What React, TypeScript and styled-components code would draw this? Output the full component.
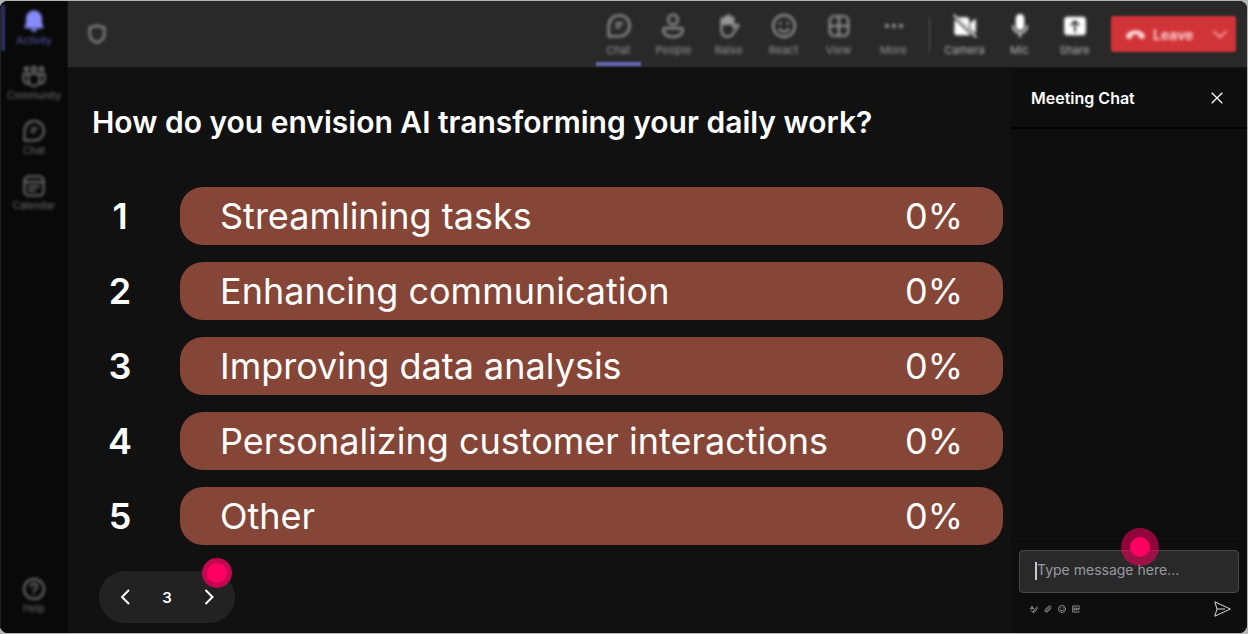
import React from "react";
import styled, { createGlobalStyle, css } from "styled-components";

const GlobalStyle = createGlobalStyle`
  *, *::before, *::after { box-sizing: border-box; }
  body {
    margin: 0;
    background: #b4b6b4;
    font-family: Inter, "Liberation Sans", sans-serif;
    color: #fff;
  }
  button { font: inherit; color: inherit; background: none; border: 0; padding: 0; cursor: pointer; }
  h1, h2, ol { margin: 0; padding: 0; }
`;

const Page = styled.div`
  min-height: 100vh;
  padding: 1px 1px 1px 0;
  display: flex;
`;

const Window = styled.div`
  flex: 1;
  min-width: 0;
  display: flex;
  background: #0e0e0e;
  border-radius: 8px;
  overflow: hidden;
`;

const Sidebar = styled.nav`
  width: 67px;
  flex: none;
  display: flex;
  flex-direction: column;
  background: #090909;
  border-left: 1px solid #202020;
  box-shadow: 0 0 3px #0c0c0c;
`;

const Spacer = styled.div`
  flex: 1;
`;

const IconLabel = styled.span`
  display: flex;
  flex-direction: column;
  align-items: center;
  filter: blur(1px);
`;

const SideButton = styled.button<{ $active?: boolean }>`
  display: flex;
  justify-content: center;
  align-items: flex-start;
  height: 55px;
  padding-top: 8px;
  color: #727272;
  font-size: 10px;
  line-height: 14px;
  position: relative;
  filter: blur(1px);
  svg { color: ${(p) => (p.$active ? "#878bfa" : "inherit")}; }
  ${(p) =>
    p.$active &&
    css`
      color: #5c5eb8;
      &::before {
        content: "";
        position: absolute;
        left: 0;
        top: 4px;
        width: 4px;
        height: 46px;
        background: #303163;
      }
    `}
`;

const HelpArea = styled.div`
  display: grid;
  padding-bottom: 9px;
`;

const Workspace = styled.div`
  flex: 1;
  min-width: 0;
  display: flex;
  flex-direction: column;
  padding-left: 1px;
`;

const Toolbar = styled.header`
  height: 66px;
  flex: none;
  display: flex;
  align-items: center;
  padding: 0 11px 0 18px;
  background: #292929;
  box-shadow: 0 1px 3px #1a1a1a;
`;

const Shield = styled.button`
  display: flex;
  color: #8a8a8a;
  filter: blur(1px);
  svg { filter: blur(1px); }
`;

const ToolButton = styled.button<{ $bright?: boolean; $active?: boolean }>`
  display: flex;
  justify-content: center;
  align-items: flex-start;
  width: 55px;
  height: 66px;
  padding-top: 12px;
  font-size: 11px;
  line-height: 14px;
  color: ${(p) => (p.$bright ? "#b8b8b8" : "#989898")};
  position: relative;
  filter: blur(1px);
  svg { margin-bottom: 4px; color: ${(p) => (p.$bright ? "#ffffff" : "inherit")}; }
  ${(p) =>
    p.$active &&
    css`
      &::after {
        content: "";
        position: absolute;
        left: 5px;
        right: 5px;
        bottom: 1px;
        height: 4px;
        background: #6669b8;
      }
    `}
`;

const Divider = styled.span`
  width: 1px;
  height: 35px;
  margin: 0 7px 0 8px;
  background: #555;
  filter: blur(1px);
`;

const LeaveGroup = styled.div`
  display: flex;
  height: 36px;
  margin-left: 9px;
  background: #d13438;
  border-radius: 3px;
  filter: blur(1px);
`;

const LeaveButton = styled.button`
  width: 92px;
  display: flex;
  align-items: center;
  gap: 7px;
  padding-left: 14px;
  font-size: 14px;
  font-weight: 600;
  color: #ffdcdc;
  filter: blur(1px);
`;

const LeaveMenu = styled.button`
  width: 33px;
  display: grid;
  place-items: center;
  color: #ffb8b8;
  filter: blur(1px);
`;

const Body = styled.div`
  flex: 1;
  display: flex;
  padding-top: 2px;
`;

const Poll = styled.main`
  flex: 1;
  min-width: 0;
  background: #111;
  padding: 35px 8px 10px 24px;
`;

const Question = styled.h1`
  font-size: 30px;
  line-height: 36px;
  font-weight: 600;
`;

const Options = styled.ol`
  list-style: none;
  display: grid;
  gap: 17px;
  margin-top: 47px;
`;

const Option = styled.li`
  display: flex;
  align-items: center;
  height: 58px;
`;

const Rank = styled.span`
  width: 56px;
  margin-right: 32px;
  text-align: center;
  font-size: 36px;
  font-weight: 600;
`;

const Bar = styled.button`
  flex: 1;
  height: 58px;
  display: flex;
  align-items: center;
  justify-content: space-between;
  padding: 0 40px;
  background: #854637;
  border-radius: 23px;
  font-size: 36px;
  line-height: 58px;
  text-align: left;
`;

const Pager = styled.div`
  position: relative;
  width: 136px;
  height: 52px;
  margin: 26px 0 0 7px;
  display: flex;
  align-items: center;
  justify-content: space-between;
  padding: 0 16px;
  background: #222;
  border-radius: 26px;
  font-size: 15px;
  font-weight: 600;
`;

const PagerButton = styled.button`
  width: 20px;
  height: 24px;
  display: grid;
  place-items: center;
`;

const Hotspot = styled.span<{ $size: number; $ring: string }>`
  position: absolute;
  width: ${(p) => p.$size}px;
  height: ${(p) => p.$size}px;
  border-radius: 50%;
  background: ${(p) => p.$ring};
  display: grid;
  place-items: center;
  pointer-events: none;
  &::after {
    content: "";
    width: 20px;
    height: 20px;
    border-radius: 50%;
    background: #ff0062;
  }
`;

const PagerHotspot = styled(Hotspot)`
  right: 3px;
  top: -13px;
`;

const ChatHotspot = styled(Hotspot)`
  left: 50%;
  top: -22px;
  margin-left: -8px;
`;

const ChatPanel = styled.aside`
  width: 236px;
  flex: none;
  display: flex;
  flex-direction: column;
  background: #0e0e0e;
`;

const ChatHeader = styled.div`
  height: 60px;
  display: flex;
  align-items: center;
  justify-content: space-between;
  padding: 0 24px 0 20px;
  border-bottom: 2px solid #020202;
  h2 { font-size: 16px; line-height: 20px; font-weight: 600; }
  button { display: flex; }
`;

const Messages = styled.div`
  flex: 1;
`;

const Composer = styled.form`
  border-top: 1px solid #080808;
  padding: 8px 8px 9px;
`;

const Field = styled.div`
  position: relative;
  display: flex;
`;

const MessageInput = styled.input`
  width: 100%;
  height: 43px;
  padding: 0 17px 4px;
  background: #292929;
  border: 1px solid #484848;
  border-radius: 4px;
  color: #fff;
  font: 14px/20px Inter, "Liberation Sans", sans-serif;
  outline: 0;
  &::placeholder { color: #959ba3; opacity: 1; }
`;

const Caret = styled.span`
  position: absolute;
  left: 16px;
  top: 12px;
  width: 2px;
  height: 18px;
  background: #c8c8c8;
`;

const Actions = styled.div`
  display: flex;
  align-items: center;
  gap: 6px;
  height: 31px;
  padding: 0 8px 0 11px;
  color: #a0a0a0;
  button { display: flex; }
`;

type IconProps = { size?: number; children: React.ReactNode; filled?: boolean; weight?: number };

const Icon = ({ size = 24, children, filled, weight = 2 }: IconProps) => (
  <svg
    width={size}
    height={size}
    viewBox="0 0 24 24"
    fill={filled ? "currentColor" : "none"}
    stroke={filled ? "none" : "currentColor"}
    strokeWidth={weight}
    strokeLinecap="round"
    strokeLinejoin="round"
    aria-hidden="true"
  >
    {children}
  </svg>
);

const chatShape = (
  <>
    <path d="M2.5 21.5V12A9.700 9.700 0 1 1 12 21.500z" />
    <path d="M9.500 9.500h5.500M9.500 13h3" />
  </>
);

const communityShape = (
  <>
    <circle cx="4.5" cy="5" r="1.800" />
    <circle cx="12" cy="5" r="2.200" />
    <circle cx="19.500" cy="5" r="1.800" />
    <path d="M6.500 10h11v6.500a5.500 5.500 0 0 1-11 0zM6.500 10H1.500v5.500a4 4 0 0 0 5 3.800M17.500 10h5v5.500a4 4 0 0 1-5 3.800" />
  </>
);

const calendarShape = (
  <>
    <rect x="2.500" y="2.500" width="19" height="19" rx="4" />
    <path d="M2.500 8h19M7 12.500h10M7 16.500h6" />
  </>
);

const tools = [
  {
    label: "Chat",
    icon: <Icon size={26}>{chatShape}</Icon>,
  },
  {
    label: "People",
    icon: (
      <Icon size={26}>
        <circle cx="12" cy="6" r="4.500" />
        <path d="M5 14h14a2 2 0 0 1 2 2c0 3.500-4 6-9 6s-9-2.500-9-6a2 2 0 0 1 2-2z" />
      </Icon>
    ),
  },
  {
    label: "Raise",
    icon: (
      <Icon size={26}>
        <path
          d="M4.500 11V5.500a1.500 1.500 0 0 1 3 0V3.500a1.500 1.500 0 0 1 3 0V2.500a1.500 1.500 0 0 1 3 0v2a1.500 1.500 0 0 1 3 0V11z"
          fill="currentColor"
          stroke="none"
        />
        <path d="M5 6v9.500c0 4 2 6.500 5.500 6.500 3 0 4.500-1.500 6-4l4.500-6.500c-1.500-1.300-3-.5-5 2V5" />
      </Icon>
    ),
  },
  {
    label: "React",
    icon: (
      <Icon size={26}>
        <circle cx="12" cy="12" r="10" />
        <path d="M7.500 15c2.500 3 6.500 3 9 0" />
        <path d="M8.500 9.500v.2M15.500 9.500v.2" strokeWidth="2.500" />
      </Icon>
    ),
  },
  {
    label: "View",
    icon: (
      <Icon size={26}>
        <rect x="3.500" y="3" width="17" height="18" rx="4" />
        <path d="M12 3v18M3.500 12h17" />
      </Icon>
    ),
  },
  {
    label: "More",
    icon: (
      <Icon size={26} filled>
        <circle cx="5.500" cy="12" r="2" />
        <circle cx="12" cy="12" r="2" />
        <circle cx="18.500" cy="12" r="2" />
      </Icon>
    ),
  },
];

const devices = [
  {
    label: "Camera",
    icon: (
      <Icon size={26} filled>
        <path d="M5.500 4H13a3 3 0 0 1 3 3v7.500zM2.500 5.500l15 15H5a3 3 0 0 1-3-3zM17 9l5-4v14l-5-4.500z" />
        <path d="M2 2l20 20" stroke="currentColor" strokeWidth="1.500" />
      </Icon>
    ),
  },
  {
    label: "Mic",
    icon: (
      <Icon size={26} filled>
        <rect x="8" y="1" width="8" height="15" rx="4" />
        <path
          d="M5.500 12a6.500 6.500 0 0 0 13 0M12 18.500V22"
          fill="none"
          stroke="currentColor"
          strokeWidth="1.500"
          strokeLinecap="round"
        />
      </Icon>
    ),
  },
  {
    label: "Share",
    icon: (
      <Icon size={26} filled>
        <rect x="2" y="3.500" width="20" height="17" rx="3" />
        <path d="M12 17V8M8.500 11L12 7.500l3.500 3.500" fill="none" stroke="#292929" strokeWidth="1.700" />
      </Icon>
    ),
  },
];

const options = [
  "Streamlining tasks",
  "Enhancing communication",
  "Improving data analysis",
  "Personalizing customer interactions",
  "Other",
];

export default function App() {
  return (
    <Page>
      <GlobalStyle />
      <Window>
        <Sidebar aria-label="Main">
          <SideButton $active>
            <IconLabel>
              <Icon size={24} filled>
                <path d="M12 1.500a8 8 0 0 0-8 8v5l-1.500 3.500c-.3.700.2 1.300 1 1.300h17c.800 0 1.300-.600 1-1.300L20 14.500v-5a8 8 0 0 0-8-8zM8.500 20a3.600 3.600 0 0 0 7 0z" />
              </Icon>
              Activity
            </IconLabel>
          </SideButton>
          <SideButton>
            <IconLabel>
              <Icon>{communityShape}</Icon>
              Community
            </IconLabel>
          </SideButton>
          <SideButton>
            <IconLabel>
              <Icon>{chatShape}</Icon>
              Chat
            </IconLabel>
          </SideButton>
          <SideButton>
            <IconLabel>
              <Icon>{calendarShape}</Icon>
              Calendar
            </IconLabel>
          </SideButton>
          <Spacer />
          <HelpArea>
            <SideButton>
              <IconLabel>
                <Icon>
                  <circle cx="12" cy="12" r="10" />
                  <path d="M9 9.500a3 3 0 1 1 4.500 2.600c-1 .6-1.500 1.200-1.500 2.200M12 17.500v.1" />
                </Icon>
                Help
              </IconLabel>
            </SideButton>
          </HelpArea>
        </Sidebar>

        <Workspace>
          <Toolbar>
            <Shield aria-label="Security">
              <Icon size={22} weight={2.5}>
                <path d="M12 2.500c2.500 1.800 5 2.300 8 2.300V12c0 4.500-3 7.800-8 9.500-5-1.700-8-5-8-9.500V4.800c3 0 5.500-.5 8-2.300z" />
              </Icon>
            </Shield>
            <Spacer />
            {tools.map((t, i) => (
              <ToolButton key={t.label} $active={i === 0}>
                <IconLabel>
                  {t.icon}
                  {t.label}
                </IconLabel>
              </ToolButton>
            ))}
            <Divider />
            {devices.map((t) => (
              <ToolButton key={t.label} $bright>
                <IconLabel>
                  {t.icon}
                  {t.label}
                </IconLabel>
              </ToolButton>
            ))}
            <LeaveGroup>
              <LeaveButton>
                <Icon size={21} filled>
                  <path d="M1.500 14.500c-.800-3 3.500-7.500 10.500-7.500s11.300 4.500 10.500 7.500l-.5 1.500c-.300.900-1 1.200-1.900 1l-2.900-.600c-.900-.200-1.400-.800-1.500-1.600l-.300-2.300c-2.200-.900-4.600-.900-6.800 0l-.300 2.300c-.100.800-.6 1.400-1.500 1.600l-2.900.6c-.9.200-1.600-.1-1.900-1z" />
                </Icon>
                Leave
              </LeaveButton>
              <LeaveMenu aria-label="Leave options">
                <Icon size={18}>
                  <path d="M4 8.500l8 8 8-8" />
                </Icon>
              </LeaveMenu>
            </LeaveGroup>
          </Toolbar>

          <Body>
            <Poll>
              <Question>How do you envision AI transforming your daily work?</Question>
              <Options>
                {options.map((label, i) => (
                  <Option key={label}>
                    <Rank>{i + 1}</Rank>
                    <Bar>
                      <span>{label}</span>
                      <span>0%</span>
                    </Bar>
                  </Option>
                ))}
              </Options>
              <Pager>
                <PagerButton aria-label="Previous">
                  <svg width="10" height="16" viewBox="0 0 10 16" fill="none" stroke="#fff" strokeWidth="2">
                    <path d="M9 1L2 8l7 7" />
                  </svg>
                </PagerButton>
                <span>3</span>
                <PagerButton aria-label="Next">
                  <svg width="10" height="16" viewBox="0 0 10 16" fill="none" stroke="#fff" strokeWidth="2">
                    <path d="M1.500 1l7 7-7 7" />
                  </svg>
                </PagerButton>
                <PagerHotspot $size={30} $ring="#c4054f" />
              </Pager>
            </Poll>

            <ChatPanel>
              <ChatHeader>
                <h2>Meeting Chat</h2>
                <button aria-label="Close chat">
                  <svg width="12" height="12" viewBox="0 0 12 12" stroke="#fff" strokeWidth="1.300">
                    <path d="M.7.700l10.600 10.600M11.300.7L.7 11.300" />
                  </svg>
                </button>
              </ChatHeader>
              <Messages />
              <Composer onSubmit={(e) => e.preventDefault()}>
                <Field>
                  <MessageInput aria-label="Message" placeholder="Type message here..." />
                  <Caret />
                  <ChatHotspot $size={38} $ring="rgba(255, 0, 98, 0.54)" />
                </Field>
                <Actions>
                  <button type="button" aria-label="Format">
                    <Icon size={8} weight={2.5}>
                      <path d="M1 13L6 3l5 10M3 10h6M22 5L11 18l-2 5 5-2L23 9M3 18c4-3 2 4 6 2" />
                    </Icon>
                  </button>
                  <button type="button" aria-label="Attach">
                    <Icon size={8} weight={2.5}>
                      <path d="M20 11l-9 9c-5 4-11-2-7-7l9-9c5-4 10 2 6 6l-9 8c-3 2-5-1-3-3l8-8" />
                    </Icon>
                  </button>
                  <button type="button" aria-label="Emoji">
                    <Icon size={8} weight={2.5}>
                      <circle cx="12" cy="12" r="10.500" />
                      <path d="M7 15c3 3 7 3 10 0M8 8v1M16 8v1" />
                    </Icon>
                  </button>
                  <button type="button" aria-label="GIF">
                    <Icon size={8} weight={2.5}>
                      <path d="M22 3H2v18h20M10 9H6v6h4v-3M14 9v6M18 15V9h5M18 12h4" />
                    </Icon>
                  </button>
                  <Spacer />
                  <button type="submit" aria-label="Send">
                    <svg width="17" height="16" viewBox="0 0 17 16" fill="none" stroke="#d8d8d8">
                      <path d="M.8.8l15.500 7.200L.8 15.200 3 8zM3 8h8" strokeLinejoin="round" />
                    </svg>
                  </button>
                </Actions>
              </Composer>
            </ChatPanel>
          </Body>
        </Workspace>
      </Window>
    </Page>
  );
}
